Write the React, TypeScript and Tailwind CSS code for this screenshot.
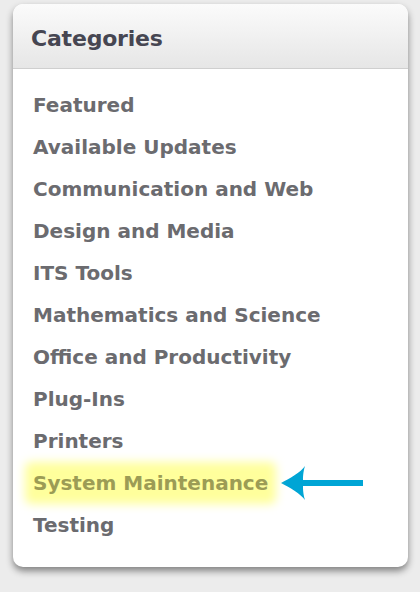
import React from "react";

const items = [
  "Featured",
  "Available Updates",
  "Communication and Web",
  "Design and Media",
  "ITS Tools",
  "Mathematics and Science",
  "Office and Productivity",
  "Plug-Ins",
  "Printers",
  "System Maintenance",
  "Testing",
];

export default function App() {
  return (
    <div
      className="w-[420px] h-[592px] bg-[#ececec] pt-[4px] pl-[13px]"
      style={{ fontFamily: '"DejaVu Sans", "Lucida Grande", sans-serif' }}
    >
      <div className="w-[395px] h-[563px] bg-white rounded-[10px] overflow-hidden shadow-[0_4px_7px_rgba(0,0,0,0.45)] flex flex-col">
        <div className="h-[65px] shrink-0 bg-gradient-to-b from-[#fbfbfb] to-[#e6e6e6] border-b border-[#cfcfcf] flex items-center pl-[18px] pt-[5px]">
          <span className="text-[22px] font-bold text-[#464652] tracking-[-0.2px]">Categories</span>
        </div>
        <div className="flex flex-col pt-[15px] pl-[20px]">
          {items.map((it) => {
            const hl = it === "System Maintenance";
            return (
              <div key={it} className="h-[42px] flex items-center">
                {hl ? (
                  <div className="flex items-center">
                    <span className="relative text-[20px] font-bold text-[#9c9c55]">
                      <span className="absolute -inset-x-[8px] -inset-y-[6px] bg-[#ffff9c] blur-[5px] rounded-[6px]" />
                      <span className="relative">{it}</span>
                    </span>
                    <svg width="84" height="34" viewBox="0 0 84 34" className="ml-[13px]">
                      <path
                        d="M0 17 C8 13 20 6 24 0 C22 6 22 12 22 14 L82 14 L82 20 L22 20 C22 22 22 28 24 34 C20 28 8 21 0 17 Z"
                        fill="#00a5d5"
                      />
                    </svg>
                  </div>
                ) : (
                  <span className="text-[20px] font-bold text-[#6b6b6f]">{it}</span>
                )}
              </div>
            );
          })}
        </div>
      </div>
    </div>
  );
}
